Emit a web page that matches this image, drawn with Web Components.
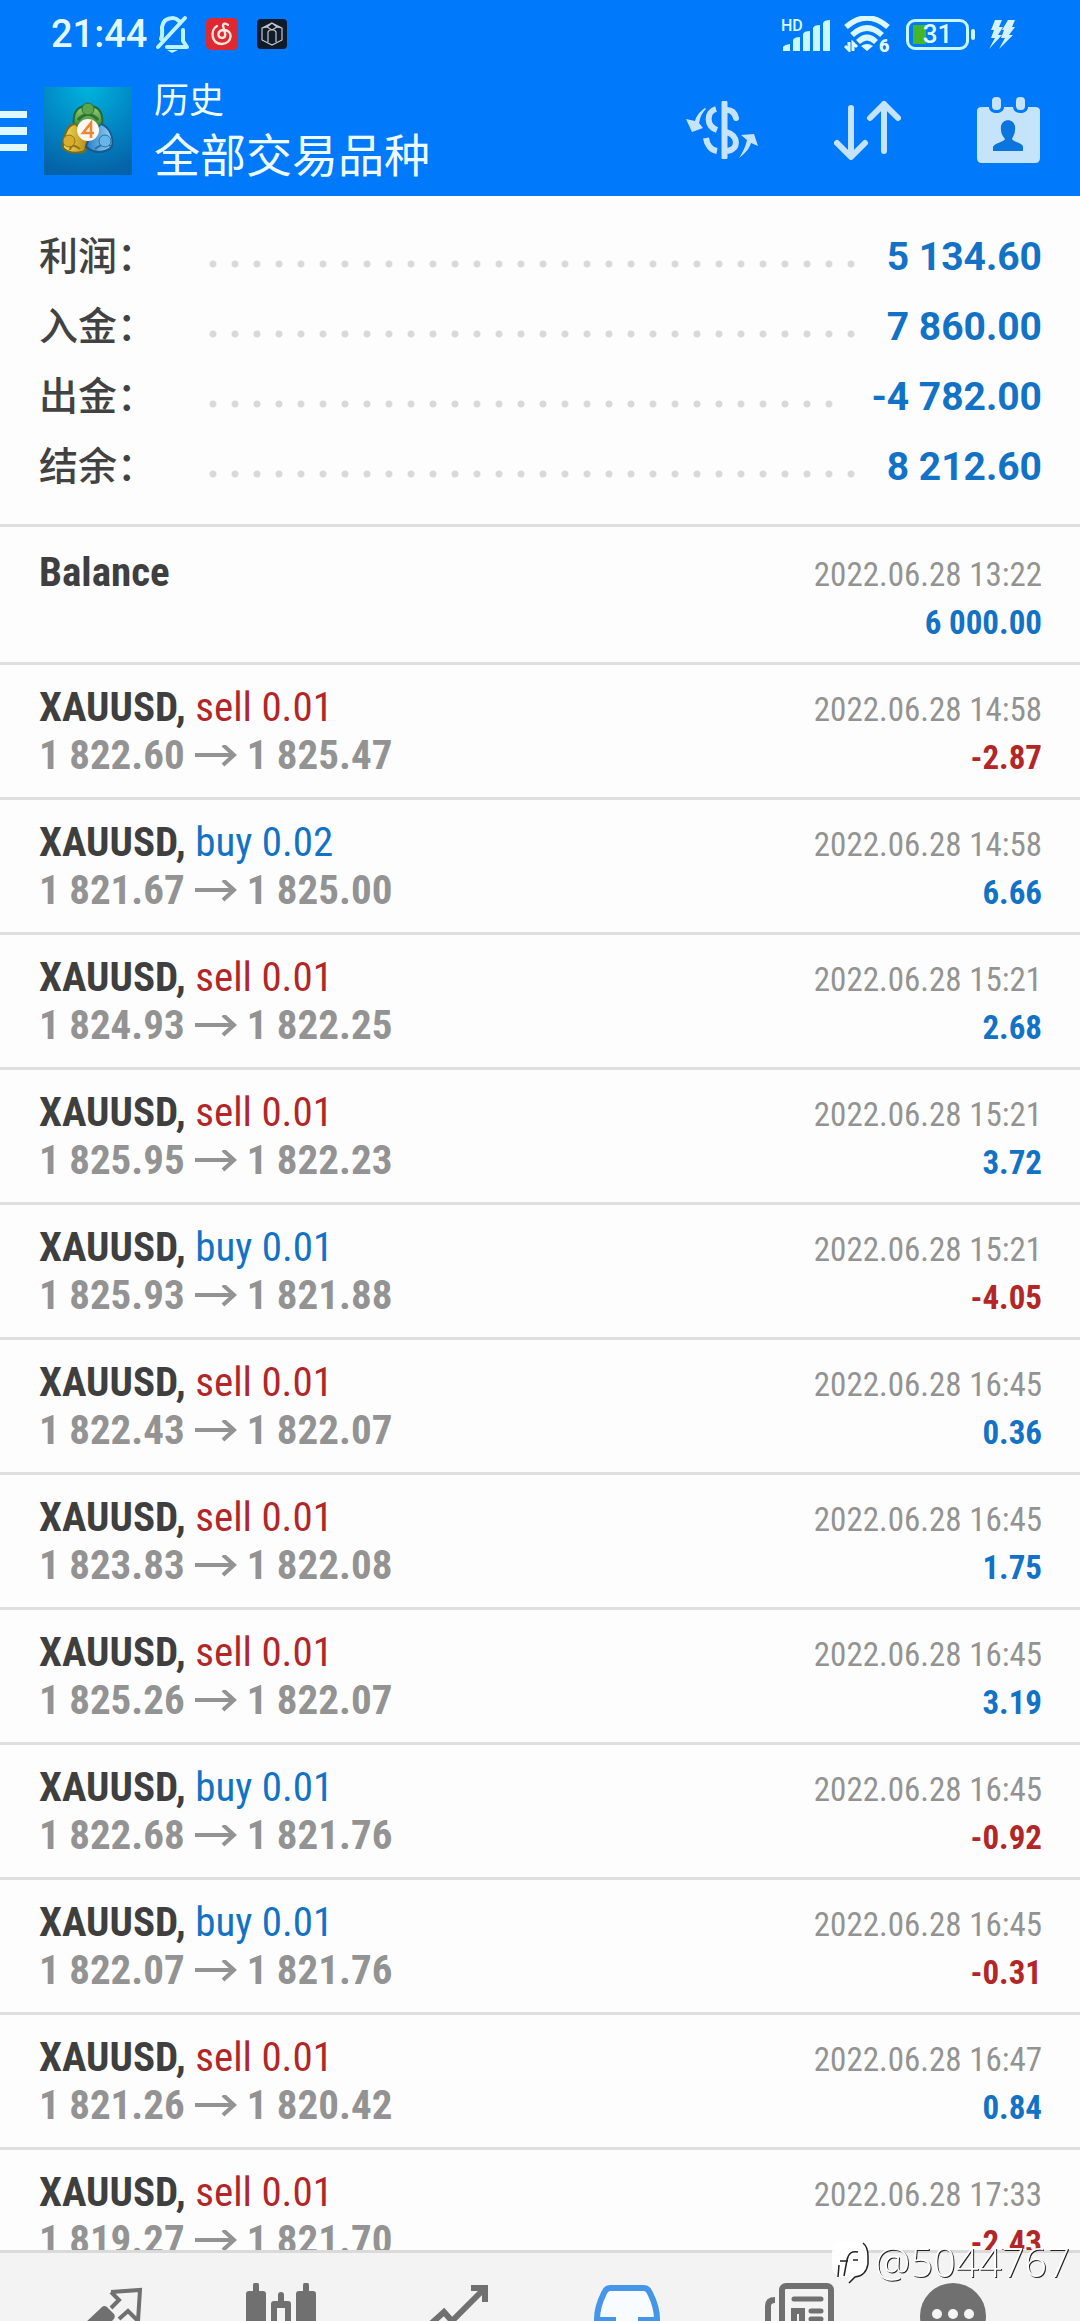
<!DOCTYPE html>
<html lang="zh-CN">
<head>
<meta charset="utf-8">
<meta name="viewport" content="width=device-width, initial-scale=1">
<title>历史</title>
<style>
:root{
  --blue:#0079fa; --ink:#3f3f3f; --gray:#939393; --buy:#1272c6; --sell:#b32628; --line:#dfdfdf; --paper:#fdfdfd;
  --cond:"Roboto Condensed","Liberation Sans Narrow",Roboto,sans-serif;
  --cjk:"Noto Sans CJK SC",sans-serif;
}
html,body{margin:0;background:var(--paper)}
body{font-family:Roboto,"Noto Sans CJK SC",sans-serif;color:var(--ink)}
</style>
</head>
<body>
<history-app></history-app>
<script>
const define=(name,html)=>customElements.define(name,class extends HTMLElement{
  connectedCallback(){
    if(this.shadowRoot)return;
    const root=this.attachShadow({mode:'open'});
    root.innerHTML=typeof html==='function'?html(this):html;
  }
});

define('status-bar',`
<style>
:host{display:flex;align-items:center;height:68px;padding:0 65px 0 51px;color:#e2f8ff}
svg{display:block;flex:none}
.time{font:500 38px/46px Roboto,sans-serif;margin-right:8px}
.left,.right{display:flex;align-items:center}
.left{flex:1}
.red{margin:0 19px 0 16px}
.hd{margin-right:12px}.wifi{margin-right:15px}
.battery{display:flex;align-items:center;margin-right:14px}
.cell{box-sizing:border-box;width:63px;height:31px;border:3px solid #c9f6ff;border-radius:9px;display:grid;place-items:center;font:500 26px/25px Roboto,sans-serif;color:#e2faff;background:linear-gradient(#45b52a,#45b52a) 4px center/13px 19px no-repeat}
.nub{width:4px;height:11px;border-radius:2px;background:#c9f6ff;margin-left:2px}
</style>
<div class="left">
  <span class="time">21:44</span>
  <svg width="35" height="38" viewBox="0 0 35 38" fill="none" stroke="#bdf3ff" stroke-width="4" stroke-linecap="round" stroke-linejoin="round"><path d="M6 24C8 20 7 17 7 12C8 6 12 3 18 3C20 3 22 4 24 6M12 32H32L28 26V15M30 3L3 32"/><path d="M12 35H23L17 38Z" fill="#bdf3ff" stroke="none"/></svg>
  <svg class="red" width="32" height="32" viewBox="0 0 32 32"><rect width="32" height="32" rx="5" fill="#df2932"/><path d="M11 8C4 12 5 26 16 26C27 25 27 12 18 12C11 12 11 20 16 20C22 20 18 12 17 8C17 5 20 5 22 7" fill="none" stroke="#ffe8e1" stroke-width="2.4" stroke-linecap="round"/></svg>
  <svg width="30" height="30" viewBox="0 0 30 30"><rect width="30" height="30" rx="4" fill="#101c2c"/><g fill="none" stroke="#c8c8c8" stroke-width="1.2"><path d="M15 4L25 9V21L15 26L5 21V9ZM15 4L10 8L15 11L20 8ZM5 9L10 8M25 9L20 8M11 23V13C12 10 18 10 19 13V23"/></g></svg>
</div>
<div class="right">
  <svg class="hd" width="51" height="36" viewBox="0 0 51 36"><g fill="#c9f7ff"><path d="M2 35v-4q1-2 7-3v7zM12 35V24q1-3 7-3v14zM22 35V18q1-3 7-3v20zM32 35V12q1-3 7-3v26zM42 35V7q1-3 7-3v31z"/></g><text x="0" y="15" font-family="Roboto" font-size="16" font-weight="500" fill="#d9faff">HD</text></svg>
  <svg class="wifi" width="47" height="36" viewBox="0 0 47 36"><g fill="none" stroke="#dcf9ff" stroke-width="5.5"><path d="M2 11Q23-7 44 11M8 19Q23 5 38 19M14 26Q23 17 32 26"/></g><path d="M17 30Q23 26 29 30L23 35Z" fill="#dcf9ff"/><path d="M1 30L5 34V26M9 35V27L13 31" fill="none" stroke="#dcf9ff" stroke-width="3"/><text x="35" y="36" font-family="Roboto" font-size="18" font-weight="900" fill="#e2faff">6</text></svg>
  <div class="battery"><span class="cell">31</span><span class="nub"></span></div>
  <svg width="26" height="29" viewBox="0 0 26 29" fill="#d5f3ff"><path d="M6 0h7l-3 7h4L9 15h4L0 29L6 18H2L5 10H2zM19 0h7l-3 7h3L20 15h4L10 29L16 18h-4L15 10h-2z"/></svg>
</div>`);

define('mt-logo',`
<style>:host{display:block;flex:none}svg{display:block}</style>
<svg width="88" height="88" viewBox="0 0 88 88" role="img" aria-label="MetaTrader 4">
<defs><radialGradient id="b" cx=".5" cy="0" r="1"><stop stop-color="#00b4dc"/><stop offset=".55" stop-color="#0286c4"/><stop offset="1" stop-color="#0563a8"/></radialGradient>
<linearGradient id="g" y2="1" x2="0"><stop stop-color="#9bcf78"/><stop offset="1" stop-color="#2f7f2c"/></linearGradient>
<linearGradient id="y"><stop stop-color="#f0df5a"/><stop offset="1" stop-color="#b98b12"/></linearGradient>
<linearGradient id="c"><stop stop-color="#2c7fc6"/><stop offset="1" stop-color="#8fd1f4"/></linearGradient></defs>
<rect width="88" height="88" fill="url(#b)"/>
<path d="M29 41C27 22 34 18 44 18S61 22 59 41Z" fill="#246b31"/><path d="M31 41C29 24 35 20 44 20S59 24 57 41Z" fill="url(#g)"/>
<path d="M31 36C22 37 19 47 18 60C20 67 34 68 42 65L45 50Z" fill="#7d6a18"/><path d="M31 38C24 39 21 48 20 60C23 65 34 66 40 63L43 50Z" fill="url(#y)"/>
<path d="M57 36C66 39 71 50 69 60C64 67 49 69 41 60L45 50Z" fill="#18588c"/><path d="M57 38C65 41 69 51 67 59C62 65 50 66 43 59L47 50Z" fill="url(#c)"/>
<path d="M34 33Q44 22 54 33" fill="none" stroke="#2a7431" stroke-width="3"/><path d="M26 63Q27 55 36 62" fill="none" stroke="#94701a" stroke-width="2"/><path d="M51 62Q59 55 67 59" fill="none" stroke="#246fa8" stroke-width="2"/>
<circle cx="44" cy="22" r="6" fill="#5aa54d" stroke="#2a7431"/>
<circle cx="25" cy="54" r="6" fill="#d9ab28" stroke="#94701a"/>
<circle cx="61" cy="54" r="6" fill="#69b6e6" stroke="#246fa8"/>
<circle cx="44" cy="43" r="11" fill="#fdf8f2"/><path d="M47 51V36L39 46H50" fill="none" stroke="#ee8638" stroke-width="2.600"/>
</svg>`);

define('app-header',`
<style>
:host{display:block;background:var(--blue)}
.bar{display:flex;align-items:center;box-sizing:border-box;height:128px;padding:0 40px 3px 0}
button{border:0;background:none;padding:0;margin:0;display:block;flex:none;color:#c5e4fb;cursor:pointer}
svg{display:block}
.menu{margin-right:17px}
.titles{flex:1;margin-left:22px;padding-bottom:5px;color:#effcff;font-family:var(--cjk);font-weight:400}
h1,p{margin:0;font-weight:400}
p{font-size:35px;line-height:48px}
h1{font-size:46px;line-height:60px}
.actions{display:flex;align-items:center;gap:76px;padding-bottom:2px}
</style>
<status-bar></status-bar>
<div class="bar">
  <button class="menu" aria-label="菜单"><svg width="27" height="40" viewBox="0 0 27 40" fill="#dff8ff"><path d="M0 0h27v7H0zM0 16h27v8H0zM0 33h27v7H0z"/></svg></button>
  <mt-logo></mt-logo>
  <div class="titles"><p>历史</p><h1>全部交易品种</h1></div>
  <div class="actions">
    <button aria-label="交易品种"><svg width="72" height="58" viewBox="0 0 72 58"><g fill="none" stroke="currentColor" stroke-width="6"><path d="M38.500 2V56" stroke-linecap="round"/><path d="M30 8C20 11 20 25 31 29M20 37C21 44 25 49 31 50"/><path d="M41 9C47 9 49 13 50 17" stroke-linecap="round"/><path d="M40 31C53 34 53 49 41 50"/></g><path d="M19 7C13 11 10 16 9 20L0 18L6 31L17 27L13 22Q15 12 20 8ZM53 57C60 52 64 46 65 42L72 45L68 33L55 34L61 39Q59 48 53 57Z" fill="currentColor"/></svg></button>
    <button aria-label="排序"><svg width="67" height="60" viewBox="0 0 67 60" fill="none" stroke="currentColor" stroke-width="6" stroke-linecap="round" stroke-linejoin="round"><path d="M17 8V56M3 43L17 57L31 43M50 51V4M36 18L50 4L64 18"/></svg></button>
    <button aria-label="日期"><svg width="63" height="66" viewBox="0 0 63 66"><path d="M5 10H12C12 18 27 18 27 10H36C36 18 51 18 51 10H58Q63 10 63 14V61Q63 66 58 66H5Q0 66 0 61V14Q0 10 5 10Z" fill="currentColor"/><rect x="15" y="0" width="9" height="13" rx="4" fill="currentColor"/><rect x="39" y="0" width="9" height="13" rx="4" fill="currentColor"/><path d="M24 33C22 20 40 20 38 33C38 37 36 39 35 42C36 45 46 46 46 50V54H16V50C17 46 27 45 28 42C26 39 24 37 24 33Z" fill="#0b74dd"/></svg></button>
  </div>
</div>`);

define('summary-line',el=>`
<style>
:host{display:flex;align-items:center;height:70px}
.label{width:163px;padding-bottom:8px;font:500 39px/58px var(--cjk);color:#424242}
.leader{flex:1;min-width:0;margin-right:18px}
.dots{width:round(down,100%,22px);height:8px;margin-top:14px;background:radial-gradient(circle at center,#d9d9d9 0 3px,transparent 4px) 0 0/22px 8px repeat-x}
.value{font:700 39px/70px Roboto,sans-serif;color:var(--buy)}
</style>
<span class="label"><slot></slot></span><span class="leader"><div class="dots"></div></span><span class="value">${el.getAttribute('value')}</span>`);

define('account-summary',`
<style>:host{display:block;padding:26px 38px 22px 39px;border-bottom:3px solid var(--line)}</style>
<slot></slot>`);

define('deal-row',el=>{
  const a=n=>el.getAttribute(n),side=a('side'),p=a('profit');
  return `
<style>
:host{display:block;padding:18px 38px 18px 39px;border-bottom:3px solid var(--line);font-family:var(--cond)}
.line{display:flex;justify-content:space-between;align-items:baseline;height:48px;font-size:41px;line-height:48px;white-space:pre}
.name{font-weight:700;color:var(--ink)}
.sell{font-weight:400;color:var(--sell)}.buy{font-weight:400;color:var(--buy)}
.prices{font-weight:700;color:var(--gray)}
.date,.profit{font-size:33px}
.date{color:var(--gray)}
.profit{font-weight:700;color:${p[0]==='-'?'var(--sell)':'var(--buy)'}}
svg{margin:0 10px}
</style>
<div class="line"><span class="name">${a('name')}${side?`, <span class="${side}">${side} ${a('lots')}</span>`:''}</span><span class="date">${a('time')}</span></div>
<div class="line"><span class="prices">${a('open')?`${a('open')}<svg width="42" height="24" viewBox="0 0 42 22" fill="none" stroke="currentColor" stroke-width="4"><path d="M0 9H40M28 -1L39 9L28 19"/></svg>${a('close')}`:'&nbsp;'}</span><span class="profit">${p}</span></div>`;
});

define('tab-bar',`
<style>
:host{display:block;position:sticky;bottom:0;background:#f3f3f3;border-top:3px solid #dadada;color:#707070}
nav{display:flex;align-items:flex-start;height:68px;overflow:hidden;padding:0 60px 0 21px}
a{flex:173 1 0;display:flex;justify-content:center;padding-top:30px;color:inherit}
a:last-child{flex-grow:134}
a.on{color:#4595e8}
svg{display:block;flex:none}
</style>
<nav>
<a href="#quotes" aria-label="行情"><svg width="70" height="70" viewBox="0 0 70 70"><path d="M38 9L67 7L65 38L55 28L46 36M38 9L46 17L38 25" fill="none" stroke="currentColor" stroke-width="4"/><path d="M12 40L29 24Q31 22 34 24L41 31Q43 34 40 37L20 56L2 40Z" fill="currentColor"/></svg></a>
<a href="#market" aria-label="K线"><svg width="70" height="70" viewBox="0 0 70 70" fill="currentColor"><path d="M7 3q0-4 3-4t3 4v5h4q3 0 3 3v59H0V11q0-3 3-3h4zM57 3q0-4 3-4t3 4v5h4q3 0 3 3v59H50V11q0-3 3-3h4z"/><path fill-rule="evenodd" d="M32 12q0-3 3-3t3 3v6h4q3 0 3 3v49H25V21q0-3 3-3h4zM31 25v45h8V25z"/></svg></a>
<a href="#chart" aria-label="图表"><svg width="70" height="70" viewBox="0 0 70 70" fill="none" stroke="currentColor" stroke-width="6"><path d="M4 48L25 29L33 38L65 6M52 5H66V19"/></svg></a>
<a class="on" href="#trade" aria-label="交易" aria-current="page"><svg width="68" height="70" viewBox="0 0 68 70"><path d="M17 5H51Q55 5 57 10Q64 24 64 36V56H4V36Q4 24 11 10Q13 5 17 5Z" fill="#f8fbff" stroke="currentColor" stroke-width="6"/><path d="M4 34H23V46H45V34H64V60H4Z" fill="currentColor"/></svg></a>
<a href="#news" aria-label="新闻"><svg width="70" height="70" viewBox="0 0 70 70" fill="none" stroke="currentColor" stroke-width="6"><rect x="17" y="3" width="49" height="65" rx="4"/><path d="M10 17Q3 17 3 23V60" stroke-width="6"/><path d="M29 16H56M46 28H56M46 36H56" stroke-linecap="round" stroke-width="5"/><path d="M29 45V28H37V45"/></svg></a>
<a href="#more" aria-label="更多"><svg width="66" height="66" viewBox="0 0 66 66"><circle cx="33" cy="33" r="33" fill="currentColor"/><g fill="#f5f5f5"><circle cx="17" cy="31" r="5"/><circle cx="33" cy="31" r="5"/><circle cx="49" cy="31" r="5"/></g></svg></a>
</nav>`);

define('author-mark',`
<style>
:host{position:fixed;right:10px;bottom:32px;display:flex;align-items:center;gap:6px;z-index:2;color:#fff;font:300 40px/54px "Open Sans",sans-serif;text-shadow:1px 1px 0 #222}
svg{display:block}
</style>
<svg width="38" height="44" viewBox="0 0 38 44"><path d="M11 1H27Q37 3 37 15V24Q35 36 24 37L19 43L17 37H10Q1 35 1 25V13Q1 2 11 1Z" fill="#fff"/><path d="M32 3Q37 7 37 16V24Q35 36 24 37L18 43M27 12Q18 10 16 20L13 36M9 21H17M22 20H27M8 25L7 37" fill="none" stroke="#222" stroke-width="1.500"/></svg>
<span>@5044767</span>`);

const deals=[
['sell','0.01','1 822.60','1 825.47','14:58','-2.87'],
['buy','0.02','1 821.67','1 825.00','14:58','6.66'],
['sell','0.01','1 824.93','1 822.25','15:21','2.68'],
['sell','0.01','1 825.95','1 822.23','15:21','3.72'],
['buy','0.01','1 825.93','1 821.88','15:21','-4.05'],
['sell','0.01','1 822.43','1 822.07','16:45','0.36'],
['sell','0.01','1 823.83','1 822.08','16:45','1.75'],
['sell','0.01','1 825.26','1 822.07','16:45','3.19'],
['buy','0.01','1 822.68','1 821.76','16:45','-0.92'],
['buy','0.01','1 822.07','1 821.76','16:45','-0.31'],
['sell','0.01','1 821.26','1 820.42','16:47','0.84'],
['sell','0.01','1 819.27','1 821.70','17:33','-2.43']];

define('history-app',`
<style>
:host{display:flex;flex-direction:column;height:100vh;overflow:hidden}
app-header,tab-bar{flex:none}
main{flex:1;min-height:0;overflow-y:auto;scrollbar-width:none}
.deals{padding-top:3px}
</style>
<app-header></app-header>
<main>
  <account-summary>
    <summary-line value="5 134.60">利润：</summary-line>
    <summary-line value="7 860.00">入金：</summary-line>
    <summary-line value="-4 782.00">出金：</summary-line>
    <summary-line value="8 212.60">结余：</summary-line>
  </account-summary>
  <div class="deals">
    <deal-row name="Balance" time="2022.06.28 13:22" profit="6 000.00"></deal-row>
    ${deals.map(([s,l,o,c,t,p])=>`<deal-row name="XAUUSD" side="${s}" lots="${l}" open="${o}" close="${c}" time="2022.06.28 ${t}" profit="${p}"></deal-row>`).join('')}
  </div>
</main>
<tab-bar></tab-bar>
<author-mark></author-mark>`);
</script>
</body>
</html>
